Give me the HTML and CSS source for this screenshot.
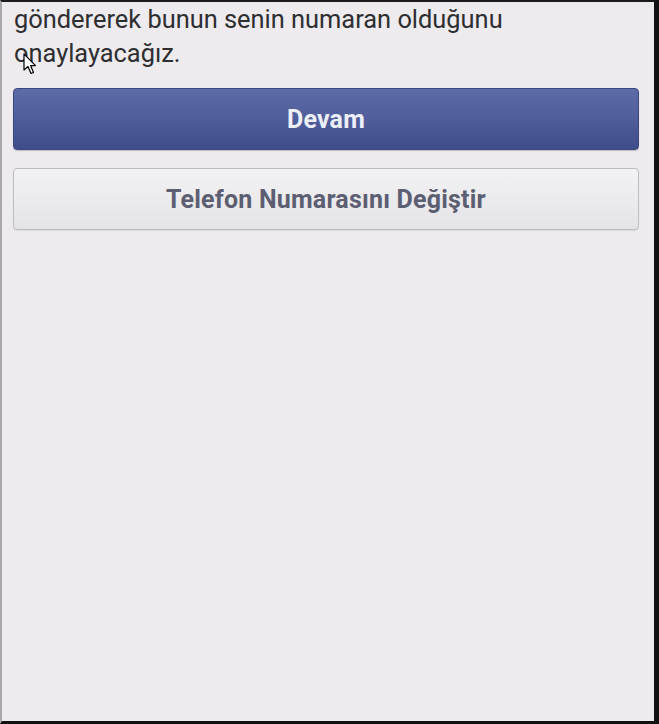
FILE: index.html
```html
<!DOCTYPE html>
<html lang="tr">
<head>
<meta charset="utf-8">
<link rel="stylesheet" href="styles.css">
</head>
<body>
<div class="frame">
  <div class="content">
    <p class="message">göndererek bunun senin numaran olduğunu onaylayacağız.</p>
    <button class="btn btn-primary">Devam</button>
    <button class="btn btn-secondary">Telefon Numarasını Değiştir</button>
  </div>
  <svg class="cursor" width="14" height="22" viewBox="0 0 14 22">
    <path d="M1 1 L1 17 L5 13.5 L8 20.5 L10.5 19.5 L7.6 12.6 L12.5 12.6 Z" fill="#fff" stroke="#000" stroke-width="1.2" stroke-linejoin="round"/>
  </svg>
</div>
</body>
</html>
```
FILE: styles.css
```css
html, body {
  margin: 0;
  padding: 0;
  background: #111;
}
.frame {
  position: relative;
  box-sizing: border-box;
  width: 659px;
  height: 724px;
  background: #edebee;
  border-top: 2px solid #1a1a1a;
  border-left: 2px solid #a8a8aa;
  border-right: 5px solid #111;
  border-bottom: 3px solid #111;
  overflow: hidden;
}
.content {
  display: flex;
  flex-direction: column;
  padding: 0 13px 0 11px;
}
.message {
  margin: 0 0 0 1px;
  font-family: Roboto, "Liberation Sans", sans-serif;
  font-size: 25.4px;
  line-height: 34px;
  color: #2e2e31;
  width: 600px;
}
.btn {
  display: flex;
  align-items: center;
  justify-content: center;
  box-sizing: border-box;
  width: 626px;
  height: 62px;
  border-radius: 4px;
  font-family: Roboto, "Liberation Sans", sans-serif;
  font-weight: bold;
  font-size: 25px;
  letter-spacing: 0.2px;
  padding: 0;
}
.btn-primary {
  margin-top: 18px;
  color: #eceef8;
  border: 1px solid #3a4780;
  background: linear-gradient(to bottom, #5d6ca7 0%, #4f5e9a 50%, #3f4c8a 100%);
  box-shadow: 0 1px 1px rgba(0,0,0,0.2);
}
.btn-secondary {
  margin-top: 18px;
  color: #5c5e72;
  border: 1px solid #bdbcc1;
  background: linear-gradient(to bottom, #f2f1f3 0%, #eae9ec 60%, #e4e3e7 100%);
  box-shadow: 0 1px 1px rgba(0,0,0,0.08);
}
.cursor {
  position: absolute;
  left: 21px;
  top: 51px;
}
```
